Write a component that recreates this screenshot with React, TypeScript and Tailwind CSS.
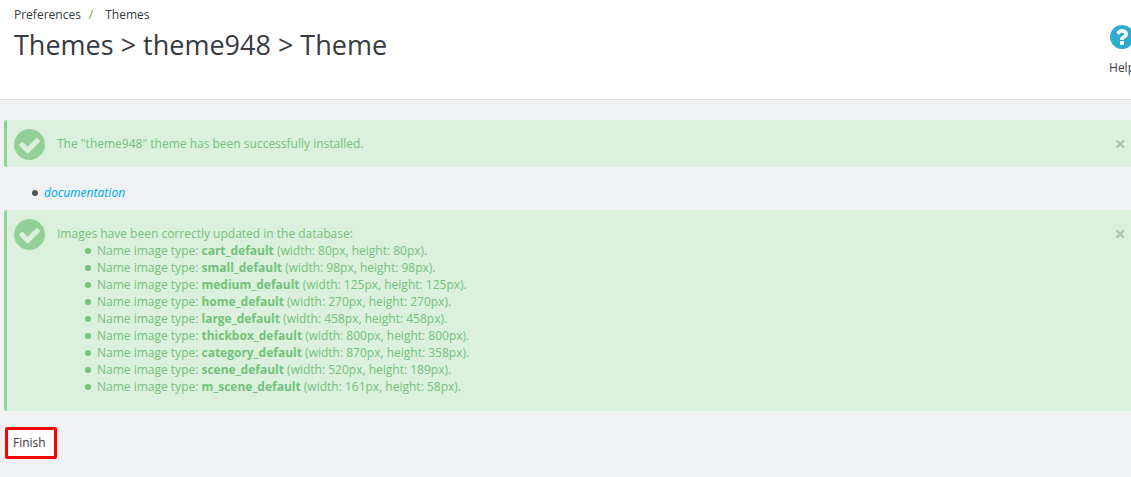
import type { ReactNode } from "react";

const imageTypes = [
  { name: "cart_default", width: 80, height: 80 },
  { name: "small_default", width: 98, height: 98 },
  { name: "medium_default", width: 125, height: 125 },
  { name: "home_default", width: 270, height: 270 },
  { name: "large_default", width: 458, height: 458 },
  { name: "thickbox_default", width: 800, height: 800 },
  { name: "category_default", width: 870, height: 358 },
  { name: "scene_default", width: 520, height: 189 },
  { name: "m_scene_default", width: 161, height: 58 },
];

function CheckCircleIcon({ className = "" }: { className?: string }) {
  return (
    <svg viewBox="128 128 1536 1536" fill="currentColor" aria-hidden="true" className={className}>
      <path d="M1412 734q0-28-18-46l-91-90q-19-19-45-19t-45 19l-408 407-226-226q-19-19-45-19t-45 19l-91 90q-18 18-18 46 0 27 18 45l362 362q19 19 45 19 27 0 46-19l543-543q18-18 18-45zm252 162q0 209-103 385.5t-279.5 279.5-385.5 103-385.5-103-279.5-279.5-103-385.5 103-385.5 279.5-279.5 385.5-103 385.5 103 279.5 279.5 103 385.5z" />
    </svg>
  );
}

function QuestionCircleIcon({ className = "" }: { className?: string }) {
  return (
    <svg viewBox="128 128 1536 1536" fill="currentColor" aria-hidden="true" className={className}>
      <path d="M1024 1376v-192q0-14-9-23t-23-9h-192q-14 0-23 9t-9 23v192q0 14 9 23t23 9h192q14 0 23-9t9-23zm256-672q0-88-55.5-163t-138.5-116-170-41q-243 0-371 213-15 24 8 42l132 100q7 6 19 6 16 0 25-12 53-68 86-92 34-24 86-24 48 0 85.5 26t37.5 59q0 38-20 61t-68 45q-63 28-115.5 86.5t-52.5 125.5v36q0 14 9 23t23 9h192q14 0 23-9t9-23q0-19 21.5-49.5t54.5-49.5q32-18 49-28.5t46-35 44.5-48 28-60.5 12.5-81zm384 192q0 209-103 385.5t-279.5 279.5-385.5 103-385.5-103-279.5-279.5-103-385.5 103-385.5 279.5-279.5 385.5-103 385.5 103 279.5 279.5 103 385.5z" />
    </svg>
  );
}

function BulletItem({ children }: { children: ReactNode }) {
  return (
    <li className="flex items-center gap-1.5 before:size-1.5 before:shrink-0 before:rounded-full before:bg-current">
      <span>{children}</span>
    </li>
  );
}

function SuccessAlert({ children }: { children: ReactNode }) {
  return (
    <div
      role="status"
      className="flex items-start rounded-l-[3px] border-l-[3px] border-[#92d097] bg-[#dcf0de] pr-[5px] pl-[7px] text-[#72c279]"
    >
      <CheckCircleIcon className="mt-[9px] mr-3 size-[31px] shrink-0 text-[#92d097]" />
      <div className="flex-1 py-[15px]">{children}</div>
      <button
        type="button"
        aria-label="Close"
        className="mt-4 cursor-pointer text-xl leading-4 font-bold text-black opacity-20"
      >
        ×
      </button>
    </div>
  );
}

export default function App() {
  return (
    <div className="min-h-screen overflow-hidden bg-[#eff1f2] font-['Open_Sans',sans-serif] text-xs leading-[17px] text-[#363a41]">
      {/* Page header */}
      <header className="flex items-start justify-between border-b border-[#dcdee0] bg-white pt-1.5 pl-3.5">
        <div>
          <nav aria-label="Breadcrumb" className="flex">
            <a href="#preferences">Preferences</a>
            <span className="mr-3 ml-2 text-[#72a230]">/</span>
            <a href="#themes">Themes</a>
          </nav>
          <h1 className="mt-1 text-[27px] leading-9">Themes &gt; theme948 &gt; Theme</h1>
        </div>
        <a href="#help" className="mt-[19px] -mr-1 mb-[23px] flex flex-col items-center gap-2.5">
          <QuestionCircleIcon className="size-6 text-[#2eacce]" />
          Help
        </a>
      </header>

      <main className="pt-5 pl-1">
        <SuccessAlert>The "theme948" theme has been successfully installed.</SuccessAlert>

        <ul className="mt-[17px] mb-[9px] pl-7 text-[#555555]">
          <BulletItem>
            <a href="#documentation" className="font-['Noto_Sans',sans-serif] text-[#00aff0] italic">
              documentation
            </a>
          </BulletItem>
        </ul>

        <SuccessAlert>
          <p>Images have been correctly updated in the database:</p>
          <ul className="pb-px pl-7">
            {imageTypes.map(({ name, width, height }) => (
              <BulletItem key={name}>
                Name image type: <b>{name}</b> (width: {width}px, height: {height}px).
              </BulletItem>
            ))}
          </ul>
        </SuccessAlert>

        <button
          type="button"
          className="mt-4 ml-px cursor-pointer rounded-xs border-3 border-[#ff0000] bg-white py-1 pr-2 pl-[5px] leading-[18px]"
        >
          Finish
        </button>
      </main>
    </div>
  );
}
